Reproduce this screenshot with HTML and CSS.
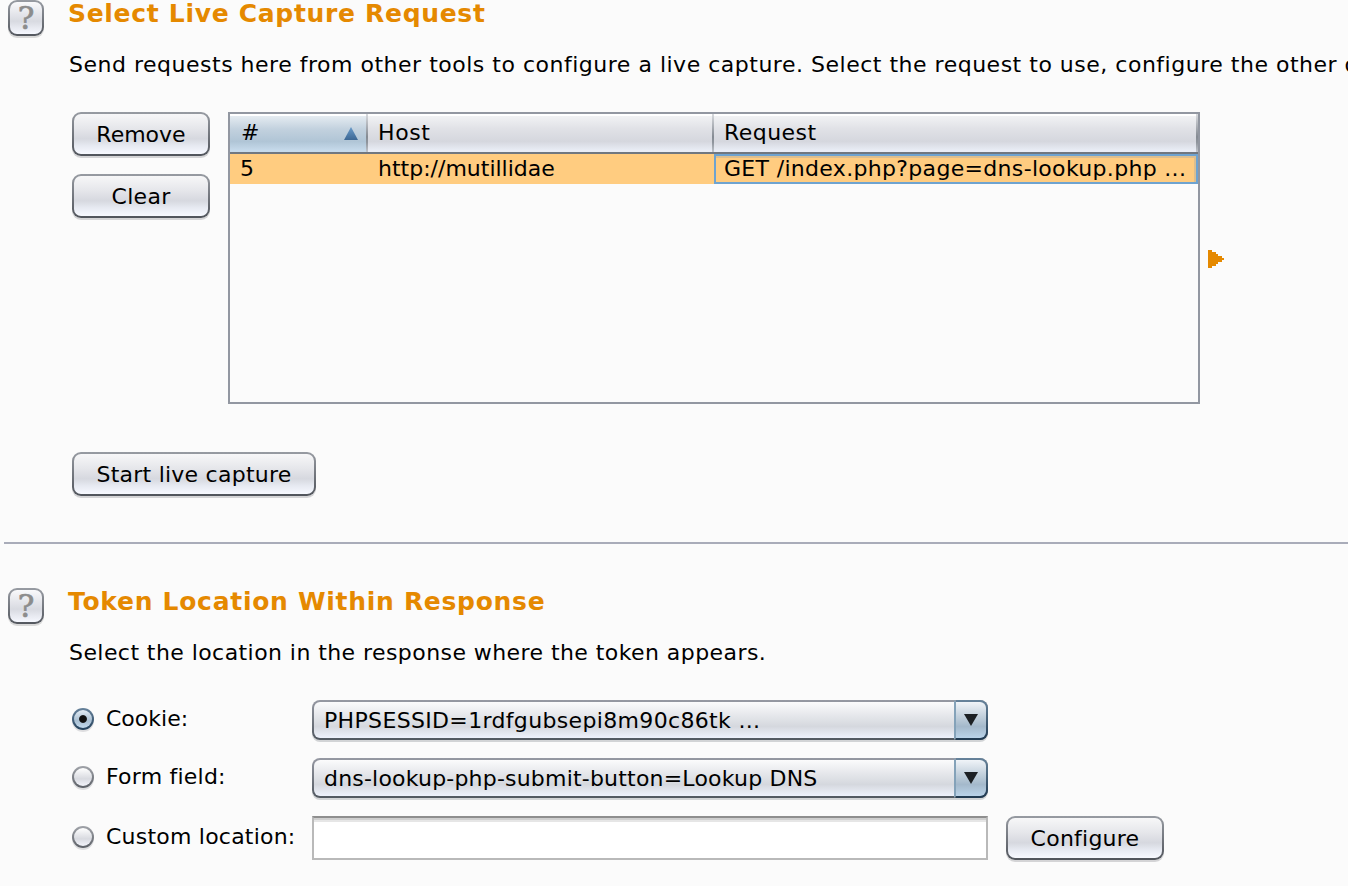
FILE: index.html
```html
<!DOCTYPE html>
<html lang="en">
<head>
<meta charset="utf-8">
<title>Live Capture</title>
<link rel="stylesheet" href="styles.css">
</head>
<body>
<main class="page">
  <section class="panel capture">
    <button class="help" type="button"><span>?</span></button>
    <div class="content">
      <h2 class="title"><span class="t-select">Select Live Capture Request</span></h2>
      <p class="desc"><span class="t-send">Send requests here from other tools to configure a live capture. Select the request to use, configure the other options</span></p>
      <div class="requests">
        <div class="actions">
          <button class="btn" type="button"><span class="t-remove">Remove</span></button>
          <button class="btn" type="button"><span class="t-clear">Clear</span></button>
        </div>
        <div class="table">
          <div class="row head">
            <div class="cell sorted"><span class="t-num">#</span>
              <svg class="sort" width="14" height="13" viewBox="0 0 14 13"><defs><linearGradient id="sg" x1="0" y1="0" x2="0" y2="1"><stop offset="0" stop-color="#6a9bc9"/><stop offset="1" stop-color="#3c6794"/></linearGradient></defs><path d="M7 0 14 13H0Z" fill="url(#sg)"/></svg>
            </div>
            <div class="cell"><span class="t-host">Host</span></div>
            <div class="cell last"><span class="t-request">Request</span></div>
          </div>
          <div class="row selected">
            <div class="cell"><span>5</span></div>
            <div class="cell"><span class="t-url">http://mutillidae</span></div>
            <div class="cell focus"><span class="t-get">GET /index.php?page=dns-lookup.php ...</span></div>
          </div>
        </div>
        <svg class="expand" width="16" height="18" viewBox="0 0 16 18" shape-rendering="crispEdges"><path d="M0 0H4V2H8V4H10V6H14V8H16V10H14V12H10V14H8V16H4V18H0Z" fill="#e58900"/></svg>
      </div>
      <button class="btn start" type="button"><span class="t-start">Start live capture</span></button>
    </div>
  </section>
  <hr class="rule">
  <section class="panel token">
    <button class="help" type="button"><span>?</span></button>
    <div class="content">
      <h2 class="title"><span class="t-token">Token Location Within Response</span></h2>
      <p class="desc"><span class="t-where">Select the location in the response where the token appears.</span></p>
      <div class="options">
        <div class="option">
          <i class="radio on"></i><label class="label"><span class="t-cookie">Cookie:</span></label>
          <div class="combo"><span class="value"><span class="t-php">PHPSESSID=1rdfgubsepi8m90c86tk ...</span></span><span class="arrow"><svg width="14" height="12" viewBox="0 0 14 12"><path d="M0 0H14L7 12Z" fill="#1c2024"/></svg></span></div>
        </div>
        <div class="option">
          <i class="radio"></i><label class="label"><span class="t-form">Form field:</span></label>
          <div class="combo"><span class="value"><span class="t-dns">dns-lookup-php-submit-button=Lookup DNS</span></span><span class="arrow"><svg width="14" height="12" viewBox="0 0 14 12"><path d="M0 0H14L7 12Z" fill="#1c2024"/></svg></span></div>
        </div>
        <div class="option custom">
          <i class="radio"></i><label class="label"><span class="t-custom">Custom location:</span></label>
          <input class="field" type="text">
          <button class="btn configure" type="button"><span class="t-conf">Configure</span></button>
        </div>
      </div>
    </div>
  </section>
</main>
</body>
</html>
```
FILE: styles.css
```css
* { box-sizing: border-box; }
body { margin: 0; background: #fbfbfb; }
.page {
  width: 1348px; height: 886px; overflow: hidden;
  font: 22px/28px "DejaVu Sans", sans-serif; color: #000; white-space: nowrap;
  font-variant-ligatures: none;
}
.panel { display: flex; gap: 24px; padding-left: 8px; }
.capture { height: 542px; }
.token { height: 298px; }
.content { width: 1280px; flex: none; }
.help {
  width: 36px; height: 36px; flex: none; padding: 0;
  border: 2px solid transparent; border-radius: 9px;
  background: linear-gradient(#f9f9fb, #d8dae1 60%, #f6f8ff) padding-box, linear-gradient(#989ca3, #54585f) border-box;
  box-shadow: 0 2px 0 #d9d9d9;
  font: 31px/32px "DejaVu Serif", serif; color: #8c8c8c; -webkit-text-stroke: .7px #8c8c8c;
}
.title { margin: 0; font-size: 25px; line-height: 27px; font-weight: bold; color: #e58900; }
.desc { margin: 24px 0 33px; padding-left: 1px; }
.requests { display: flex; align-items: flex-start; padding-left: 4px; }
.actions { display: flex; flex-direction: column; gap: 18px; width: 138px; margin-right: 18px; }
.btn {
  height: 44px; padding: 2px 0 0; text-align: center;
  border: 2px solid transparent; border-radius: 9px;
  background: linear-gradient(#f7f7f8, #e6e7eb 35%, #d6d8df 62%, #e7eaf2 80%, #f7f9ff) padding-box, linear-gradient(#979ba2, #50545b) border-box;
  box-shadow: 0 2px 0 #d4d4d6;
  font: inherit; color: #000;
}
.start { display: block; width: 244px; margin: 48px 0 0 4px; }
.table { width: 972px; height: 292px; border: 2px solid #9297a1; }
.row { display: grid; grid-template-columns: 138px 346px 484px; }
.head .cell {
  height: 40px; padding: 5px 0 0 10px; display: flex;
  border-bottom: 2px solid #707780;
  background:
    linear-gradient(#d8dade, #858b93 60%, #8f959d 75%, #c0c4cb) right / 2px 100% no-repeat padding-box,
    linear-gradient(#fff 0, #fff 5%, #f1f2f4 6%, #e0e1e6 40%, #d5d7de 72%, #e9edf6 96%) padding-box;
}
.head .sorted {
  justify-content: space-between; padding-right: 10px;
  background:
    linear-gradient(#d8dade, #858b93 60%, #8f959d 75%, #c0c4cb) right / 2px 100% no-repeat padding-box,
    linear-gradient(#fff 0, #fff 5%, #e4ebf1 6%, #c2d1de 40%, #b0c5d6 72%, #c6daeb 96%) padding-box;
}
.sort { margin-top: 8px; }
.selected .cell { height: 30px; padding: 1px 0 0 10px; background: #ffcc80; }
.selected .cell.focus { border: 2px solid #6ea3d0; padding: 0 0 0 8px; line-height: 26px; box-shadow: inset 0 2px 0 #dcbe8e, inset -2px 0 0 #dcbe8e; }
.expand { margin: 138px 0 0 8px; }
.rule { height: 2px; margin: 0 0 44px 4px; border: 0; background: #a9acb9; }
.options { display: flex; flex-direction: column; gap: 18px; padding-left: 4px; }
.option { display: flex; height: 40px; align-items: flex-start; }
.custom { height: 44px; }
.radio {
  width: 22px; height: 22px; flex: none; margin-top: 8px;
  border: 2px solid transparent; border-radius: 50%;
  background: linear-gradient(#fff, #d8dae0 60%, #f2f3fa) padding-box, linear-gradient(#a0a3a9, #5c6067) border-box;
  box-shadow: 0 2px 0 #dedee0;
}
.radio.on {
  background: radial-gradient(circle, #111 3.4px, transparent 4.4px) padding-box, linear-gradient(#e4edf5, #a9bfd2 60%, #c3daee) padding-box, linear-gradient(#67829b, #24415c) border-box;
}
.custom .radio { margin-top: 10px; }
.label { width: 206px; margin: 5px 0 0 12px; }
.custom .label { margin-top: 7px; }
.combo {
  display: flex; width: 676px; height: 40px; border: 2px solid transparent; border-radius: 8px;
  background: linear-gradient(#fbfbfc, #e4e6ea 40%, #d5d8de 68%, #eef2fc) padding-box, linear-gradient(#9699a3, #515860) border-box;
  box-shadow: 0 2px 0 #d2d4d6;
}
.value { flex: 1; padding: 5px 0 0 10px; }
.arrow {
  width: 34px; height: 40px; margin: -2px; padding: 12px 0 0 8px; line-height: 0;
  border: 2px solid transparent; border-left: 2px solid #84a2b9; border-radius: 0 8px 8px 0;
  background: linear-gradient(#f0f4f8, #c2d0dc 40%, #a4b9cb 68%, #bad3e9) padding-box, linear-gradient(#67839b, #203950) border-box;
}
.field { width: 676px; height: 44px; border: 2px solid #b9b9b9; border-top-color: #8e8e8e; background: #fff; box-shadow: inset 0 2px 0 #cfcfcf, inset 0 4px 0 #e6e6e6; }
.configure { width: 158px; margin-left: 18px; }

/* Per-label tracking */
.t-select { letter-spacing: .69px; }
.t-token { letter-spacing: .71px; }
.t-send { letter-spacing: .51px; }
.t-where { letter-spacing: .43px; }
.t-clear { letter-spacing: .3px; }
.t-start, .t-conf { letter-spacing: .24px; }
.t-num { padding-left: 1px; }
.t-host { letter-spacing: .6px; }
.t-request { letter-spacing: .45px; }
.t-get { letter-spacing: .32px; }
.t-php { letter-spacing: .34px; }
.t-dns { letter-spacing: .2px; }
.t-form, .t-custom { letter-spacing: .22px; }
```
